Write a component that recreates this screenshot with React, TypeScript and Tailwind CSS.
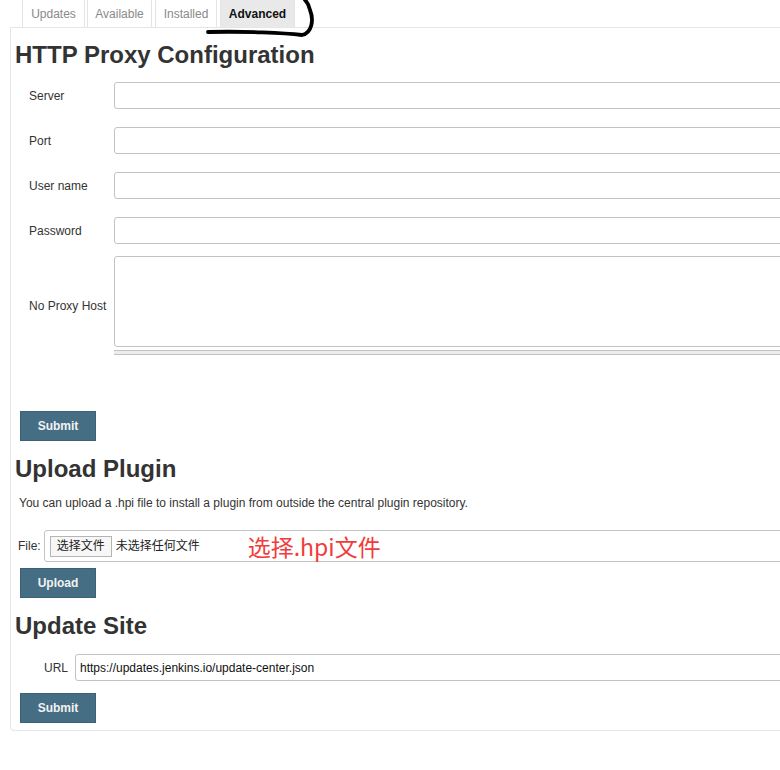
import React from 'react';

const font = { fontFamily: '"Liberation Sans", Arial, "Noto Sans CJK SC", sans-serif' };

const tabs = [
  { label: 'Updates', w: 'w-[63px]', ml: 'ml-[22px]' },
  { label: 'Available', w: 'w-[65px]', ml: 'ml-[2px]' },
  { label: 'Installed', w: 'w-[62px]', ml: 'ml-[3px]' },
  { label: 'Advanced', w: 'w-[75px]', ml: 'ml-[3px]', active: true },
];

const SubmitButton: React.FC<{ label: string; className?: string }> = ({ label, className }) => (
  <button
    className={`ml-[9px] block h-[30px] w-[76px] border border-[#3a6275] bg-[#456e84] text-[12px] font-bold text-[#f2f2f2] ${className ?? ''}`}
  >
    {label}
  </button>
);

const Field: React.FC<{ label: string; mt: string }> = ({ label, mt }) => (
  <div className={`flex items-center ${mt}`}>
    <div className="w-[103px] shrink-0 pl-[18px] text-[12px] text-[#333]">{label}</div>
    <input className="h-[27px] w-[720px] rounded-[3px] border border-[#c3c3c3] bg-white" />
  </div>
);

const Heading: React.FC<{ children: React.ReactNode; className?: string }> = ({ children, className }) => (
  <h2 className={`pl-[4px] text-[24px] leading-[29px] font-bold text-[#333] ${className ?? ''}`}>{children}</h2>
);

export default function App() {
  return (
    <div className="relative h-[770px] w-[780px] overflow-hidden bg-white" style={font}>
      {/* tabs */}
      <div className="flex h-[27px]">
        {tabs.map(t => (
          <div
            key={t.label}
            className={`${t.w} ${t.ml} -mt-[2px] flex h-[29px] items-center justify-center rounded-t-[4px] border border-b-0 border-[#e4e4e4] pt-[2px] text-[12px] ${
              t.active ? 'bg-[#e9e9e9] font-bold text-[#111]' : 'bg-white text-[#8a8a8a]'
            }`}
          >
            {t.label}
          </div>
        ))}
      </div>

      {/* hand drawn annotation */}
      <svg className="absolute left-0 top-0" width="780" height="45" viewBox="0 0 780 45">
        <path
          d="M208 32 C 245 31, 285 33, 302 35 C 312 33, 314 20, 310 10 C 309 5, 307 2, 305 0"
          fill="none"
          stroke="#000"
          strokeWidth="3.8"
          strokeLinecap="round"
        />
      </svg>

      {/* panel */}
      <div className="ml-[10px] h-[704px] w-[900px] rounded-b-[4px] border border-[#e6e6e6]">
        <Heading className="mt-[12px]">HTTP Proxy Configuration</Heading>

        <Field label="Server" mt="mt-[13px]" />
        <Field label="Port" mt="mt-[18px]" />
        <Field label="User name" mt="mt-[18px]" />
        <Field label="Password" mt="mt-[18px]" />

        <div className="mt-[12px] flex items-center">
          <div className="w-[103px] shrink-0 pl-[18px] text-[12px] text-[#333]">No Proxy Host</div>
          <div className="w-[720px]">
            <div className="h-[91px] rounded-[3px] border border-[#c3c3c3] bg-white" />
            <div className="mt-[3px] h-[5px] border-b border-t border-[#c3c3c3] bg-[#ececec]" />
          </div>
        </div>

        <SubmitButton label="Submit" className="mt-[56px]" />

        <Heading className="mt-[13px]">Upload Plugin</Heading>
        <p className="mt-[11px] pl-[8px] text-[12px] text-[#333]">
          You can upload a .hpi file to install a plugin from outside the central plugin repository.
        </p>

        <div className="mt-[18px] flex items-center pl-[7px]">
          <span className="text-[12px] text-[#333]">File:</span>
          <div className="ml-[3px] flex h-[32px] w-[760px] items-center rounded-[3px] border border-[#c3c3c3] pl-[5px]">
            <span className="flex h-[21px] items-center border border-[#b5b5b5] bg-[#f7f7f7] px-[6px] text-[12px] text-[#222]">
              选择文件
            </span>
            <span className="ml-[4px] text-[12px] text-[#222]">未选择任何文件</span>
            <span
              className="ml-[48px] text-[23px] leading-[24px] text-[#f23b3b]"
              style={{ fontFamily: '"Noto Sans CJK SC", "Noto Sans", sans-serif' }}
            >
              选择.hpi文件
            </span>
          </div>
        </div>

        <SubmitButton label="Upload" className="mt-[6px]" />

        <Heading className="mt-[13px]">Update Site</Heading>
        <div className="mt-[14px] flex items-center">
          <div className="w-[64px] shrink-0 pr-[7px] text-right text-[12px] text-[#333]">URL</div>
          <input
            readOnly
            value="https://updates.jenkins.io/update-center.json"
            className="h-[27px] w-[760px] rounded-[3px] border border-[#c3c3c3] bg-white pl-[4px] text-[12px] text-[#111]"
          />
        </div>
        <SubmitButton label="Submit" className="mt-[12px]" />
      </div>
    </div>
  );
}
